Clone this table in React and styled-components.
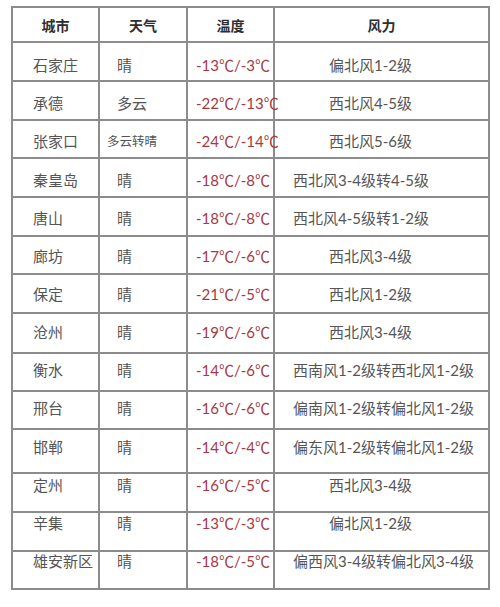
import React from 'react';
import styled, { createGlobalStyle } from 'styled-components';

const GlobalStyle = createGlobalStyle`
  html, body {
    margin: 0;
    padding: 0;
    background: #fff;
  }
  body {
    font-family: "Noto Sans CJK SC", "Noto Sans", sans-serif;
  }
`;

// each row: its own height and how far down the text sits (the source image drifts)
const rows = [
  { city: '石家庄', weather: '晴', temp: '-13℃/-3℃', wind: '偏北风1-2级', h: 39, pt: 13, inset: true },
  { city: '承德', weather: '多云', temp: '-22℃/-13℃', wind: '西北风4-5级', h: 39, pt: 12, inset: true },
  { city: '张家口', weather: '多云转晴', temp: '-24℃/-14℃', wind: '西北风5-6级', h: 38, pt: 11, inset: true, small: true },
  { city: '秦皇岛', weather: '晴', temp: '-18℃/-8℃', wind: '西北风3-4级转4-5级', h: 39, pt: 12 },
  { city: '唐山', weather: '晴', temp: '-18℃/-8℃', wind: '西北风4-5级转1-2级', h: 39, pt: 11 },
  { city: '廊坊', weather: '晴', temp: '-17℃/-6℃', wind: '西北风3-4级', h: 38, pt: 10, inset: true },
  { city: '保定', weather: '晴', temp: '-21℃/-5℃', wind: '西北风1-2级', h: 39, pt: 10, inset: true },
  { city: '沧州', weather: '晴', temp: '-19℃/-6℃', wind: '西北风3-4级', h: 40, pt: 9, inset: true },
  { city: '衡水', weather: '晴', temp: '-14℃/-6℃', wind: '西南风1-2级转西北风1-2级', h: 38, pt: 7 },
  { city: '邢台', weather: '晴', temp: '-16℃/-6℃', wind: '偏南风1-2级转偏北风1-2级', h: 38, pt: 7 },
  { city: '邯郸', weather: '晴', temp: '-14℃/-4℃', wind: '偏东风1-2级转偏北风1-2级', h: 44, pt: 8 },
  { city: '定州', weather: '晴', temp: '-16℃/-5℃', wind: '西北风3-4级', h: 39, pt: 2, inset: true },
  { city: '辛集', weather: '晴', temp: '-13℃/-3℃', wind: '偏北风1-2级', h: 39, pt: 1, inset: true },
  { city: '雄安新区', weather: '晴', temp: '-18℃/-5℃', wind: '偏西风3-4级转偏北风3-4级', h: 38, pt: 0 },
];

const Page = styled.div`
  padding: 6px 0 0 11px;
`;

const Table = styled.div`
  width: 477px;
  border-top: 2px solid #8c8c8c;
  border-left: 2px solid #8c8c8c;
`;

const Row = styled.div`
  display: grid;
  grid-template-columns: 87px 88px 87px 215px;
  height: ${p => p.$h}px;
  box-sizing: border-box;
  border-bottom: 2px solid #8c8c8c;
`;

const HeadCell = styled.div`
  box-sizing: border-box;
  border-right: 2px solid #8c8c8c;
  display: flex;
  align-items: center;
  justify-content: center;
  font-size: 14px;
  font-weight: 700;
  color: #2e2e2e;
`;

const Cell = styled.div`
  box-sizing: border-box;
  border-right: 2px solid #8c8c8c;
  padding-top: ${p => p.$pt}px;
  font-size: 15px;
  line-height: 18px;
  color: #555;
  white-space: nowrap;
  overflow: visible;
  font-family: Lato, "Noto Sans CJK SC", sans-serif;
`;

const CityCell = styled(Cell)`
  padding-left: 20px;
`;

const WeatherCell = styled(Cell)`
  padding-left: ${p => (p.$small ? 7 : 17)}px;
  font-size: ${p => (p.$small ? 12.5 : 15)}px;
`;

const TempCell = styled(Cell)`
  padding-left: 8px;
  color: #a8383f;
  position: relative;
  z-index: 1;
`;

const WindCell = styled(Cell)`
  padding-left: ${p => (p.$inset ? 54 : 18)}px;
`;

export default function App() {
  return (
    <Page>
      <GlobalStyle />
      <Table>
        <Row $h={35}>
          <HeadCell>城市</HeadCell>
          <HeadCell>天气</HeadCell>
          <HeadCell>温度</HeadCell>
          <HeadCell>风力</HeadCell>
        </Row>
        {rows.map(r => (
          <Row key={r.city} $h={r.h}>
            <CityCell $pt={r.pt}>{r.city}</CityCell>
            <WeatherCell $pt={r.pt + (r.small ? 1 : 0)} $small={r.small}>{r.weather}</WeatherCell>
            <TempCell $pt={r.pt}>{r.temp}</TempCell>
            <WindCell $pt={r.pt} $inset={r.inset}>{r.wind}</WindCell>
          </Row>
        ))}
      </Table>
    </Page>
  );
}
